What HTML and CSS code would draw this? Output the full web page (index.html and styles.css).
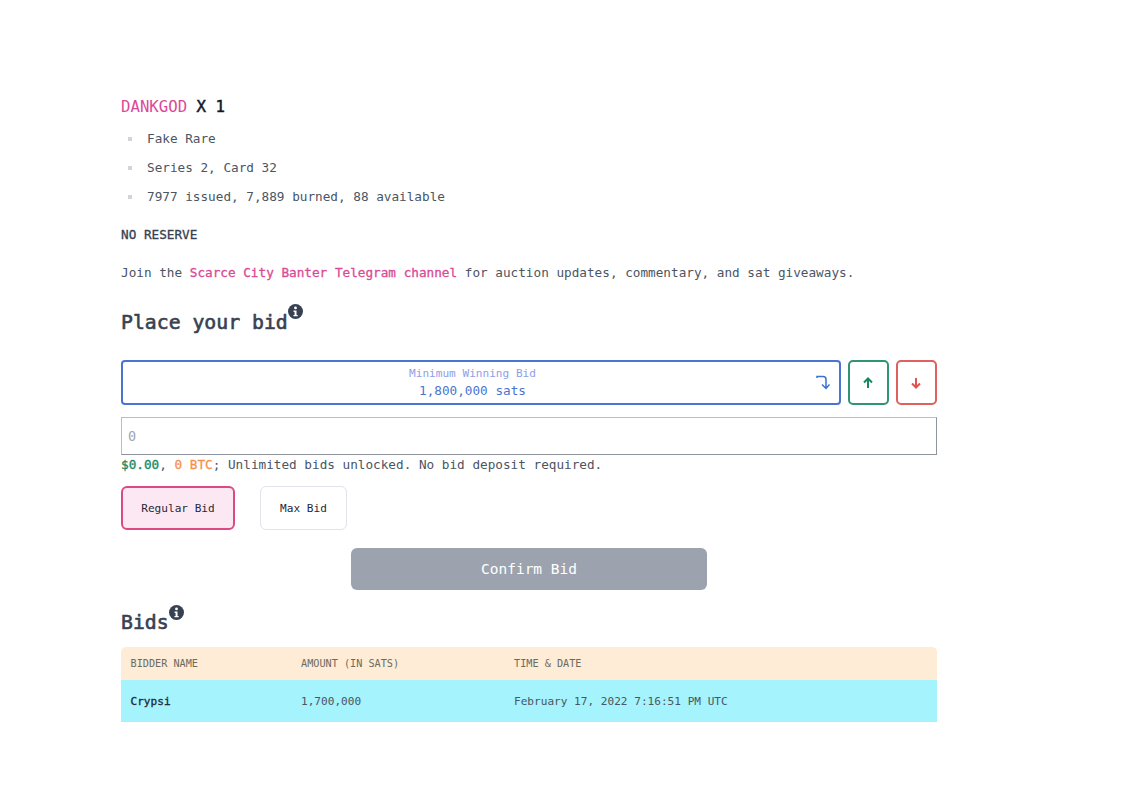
FILE: index.html
```html
<!DOCTYPE html>
<html lang="en">
<head>
<meta charset="utf-8">
<title>DANKGOD X 1</title>
<link rel="stylesheet" href="styles.css">
</head>
<body>
<main class="page">
  <h3 class="title"><span class="pink-text">DANKGOD</span> <strong>X 1</strong></h3>
  <ul class="facts">
    <li>Fake Rare</li>
    <li>Series 2, Card 32</li>
    <li>7977 issued, 7,889 burned, 88 available</li>
  </ul>
  <p class="reserve">NO RESERVE</p>
  <p class="join">Join the <a href="#" class="link">Scarce City Banter Telegram channel</a> for auction updates, commentary, and sat giveaways.</p>
  <h2 class="heading place">Place your bid<svg class="info" viewBox="0 0 16 16"><circle cx="8" cy="8" r="8" fill="#374151"/><circle cx="8" cy="4.2" r="1.5" fill="#fff"/><path d="M5.9 7h3.2v4.6h1.2v1.5H5.8v-1.5h1.2V8.5H5.900z" fill="#fff"/></svg></h2>
  <div class="bid-row">
    <button class="min-bid">
      <span class="min-label">Minimum Winning Bid</span>
      <span class="min-value">1,800,000 sats</span>
      <svg class="turn" viewBox="0 0 14 16" fill="none" stroke="#3b6fd4" stroke-width="1.5"><path d="M1 4V2.500h6a3 3 0 0 1 3 3V14M6 10.500l4 4 3.500-4"/></svg>
    </button>
    <button class="step up"><svg viewBox="0 0 12 12" fill="none" stroke="#16885f" stroke-width="2"><path d="M6 11V2M2 5.500l4-4 4 4"/></svg></button>
    <button class="step down"><svg viewBox="0 0 12 12" fill="none" stroke="#e0524f" stroke-width="2"><path d="M6 1v9M2 6.500l4 4 4-4"/></svg></button>
  </div>
  <input class="amount" type="text" placeholder="0">
  <p class="helper"><b class="usd">$0.00</b>, <b class="btc">0 BTC</b>; Unlimited bids unlocked. No bid deposit required.</p>
  <div class="types">
    <button class="type active">Regular Bid</button>
    <button class="type">Max Bid</button>
  </div>
  <div class="confirm-wrap"><button class="confirm">Confirm Bid</button></div>
  <h2 class="heading bids">Bids<svg class="info" viewBox="0 0 16 16"><circle cx="8" cy="8" r="8" fill="#374151"/><circle cx="8" cy="4.2" r="1.5" fill="#fff"/><path d="M5.9 7h3.2v4.600h1.200v1.500H5.800v-1.500h1.200V8.500H5.900z" fill="#fff"/></svg></h2>
  <table class="table">
    <thead>
      <tr><th class="c1">BIDDER NAME</th><th class="c2">AMOUNT (IN SATS)</th><th>TIME &amp; DATE</th></tr>
    </thead>
    <tbody>
      <tr><td class="name">Crypsi</td><td>1,700,000</td><td>February 17, 2022 7:16:51 PM UTC</td></tr>
    </tbody>
  </table>
</main>
</body>
</html>
```
FILE: styles.css
```css
* { box-sizing: border-box; }
html, body { margin: 0; background: #fff; }
body { font-family: "DejaVu Sans Mono", "Liberation Mono", monospace; color: #4b5563; }
.page { width: 937px; padding: 97px 0 0 121px; font-size: 12.7px; }
p, h2, h3, ul { margin: 0; }
button { font-family: inherit; background: #fff; cursor: pointer; padding: 0; }

.title { font-size: 15.7px; line-height: 19px; font-weight: 400; color: #111827; }
.title strong { font-weight: 400; -webkit-text-stroke: 0.5px #111827; }
.pink-text { color: #db4a96; }

.facts { list-style: none; padding: 0; margin-top: 8px; }
.facts li { display: flex; align-items: center; height: 29px; padding-left: 26px; position: relative; }
.facts li::before { content: ""; position: absolute; left: 7px; top: 13px; width: 4px; height: 4px; background: #d1d5db; }

.reserve { margin-top: 15px; line-height: 18px; font-weight: 400; color: #374151; -webkit-text-stroke: 0.3px #374151; }
.join { margin-top: 20px; line-height: 18px; }
.link { color: #db4a96; text-decoration: none; -webkit-text-stroke: 0.3px #db4a96; }

.heading { font-size: 19.8px; font-weight: 400; color: #374151; -webkit-text-stroke: 0.6px #374151; display: flex; align-items: flex-start; }
.place { margin-top: 28px; height: 47px; padding-top: 1px; }
.info { width: 15px; height: 15px; margin-top: -7px; flex: none; }

.bid-row { display: flex; gap: 7px; margin-top: 3px; height: 45px; }
.min-bid { position: relative; width: 720px; padding: 0 17px 0 0; border: 2px solid #4a74d0; border-radius: 4px; display: flex; flex-direction: column; align-items: center; justify-content: center; }
.min-label { font-size: 11.1px; line-height: 17px; color: #8f9ee8; }
.min-value { font-size: 12.7px; line-height: 18px; color: #4a74d0; }
.turn { position: absolute; right: 9px; top: 12px; width: 14px; height: 16px; }
.step { width: 41px; height: 45px; padding-right: 1px; border-radius: 5px; border: 2px solid; display: flex; align-items: center; justify-content: center; }
.step svg { width: 12px; height: 12px; }
.up { border-color: #2f9570; }
.down { border-color: #e0605d; }

.amount { display: block; width: 816px; height: 38px; margin-top: 12px; padding: 0 6px; border: 1px solid #8f939b; border-top-color: #b9bdc4; border-left-color: #b9bdc4; border-radius: 0; font: inherit; font-size: 13.5px; outline: none; }
.amount::placeholder { color: #a3a6ab; }

.helper { margin-top: 1px; line-height: 17px; }
.usd { color: #16885f; font-weight: 400; -webkit-text-stroke: 0.3px #16885f; }
.btc { color: #f5914e; font-weight: 400; -webkit-text-stroke: 0.3px #f5914e; }

.types { display: flex; gap: 25px; margin-top: 13px; }
.type { width: 87px; height: 44px; border: 1px solid #e0e3e8; border-radius: 6px; font-size: 11.1px; color: #1f2937; }
.active { width: 114px; border: 2px solid #db4a85; background: #fce8f3; }

.confirm-wrap { display: flex; padding-left: 230px; margin-top: 18px; }
.confirm { width: 356px; height: 42px; border: 0; border-radius: 6px; background: #9ca3af; color: #fff; font-size: 14.5px; }

.bids { margin-top: 18px; height: 39px; padding-top: 3px; }
.bids .info { margin-top: -6px; }

.table { width: 816px; border-collapse: collapse; font-size: 11.1px; table-layout: fixed; }
.c1 { width: 171px; }
.c2 { width: 213px; }
th { height: 33px; background: #feecd6; text-align: left; font-size: 10.2px; font-weight: 400; color: #6b6b60; padding: 0 9px; }
th:first-child { border-top-left-radius: 5px; padding-left: 9.5px; }
th:last-child { border-top-right-radius: 5px; }
td { height: 42px; background: #a5f3fc; padding: 0 9px; color: #4b5563; }
.name { padding-left: 9.5px; color: #1f2937; -webkit-text-stroke: 0.3px #1f2937; }
```
